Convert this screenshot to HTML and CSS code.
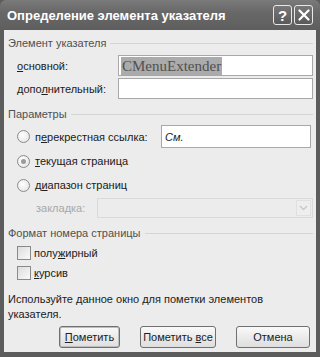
FILE: index.html
```html
<!DOCTYPE html>
<html>
<head>
<meta charset="utf-8">
<link rel="stylesheet" href="styles.css">
</head>
<body>
<div class="window">
  <div class="titlebar">
    <span class="title">Определение элемента указателя</span>
    <div class="tbtns">
      <span class="tbtn">?</span>
      <span class="tbtn"><svg width="12" height="12" viewBox="0 0 12 12"><path d="M1.5 1.5L10.5 10.5M10.5 1.5L1.5 10.5" stroke="#fff" stroke-width="2.2" stroke-linecap="round"/></svg></span>
    </div>
  </div>
  <div class="body">
    <div class="group"><span>Элемент указателя</span><i></i></div>
    <div class="frow r1"><span class="lbl"><u>о</u>сновной:</span><div class="inp"><span class="sel">CMenuExtender</span></div></div>
    <div class="frow r2"><span class="lbl">допо<u>л</u>нительный:</span><div class="inp"></div></div>

    <div class="group g2"><span>Параметры</span><i></i></div>
    <div class="rrow rr1"><span class="radio"></span><span class="rl">п<u>е</u>рекрестная ссылка:</span><div class="inp see">См.</div></div>
    <div class="rrow rr2"><span class="radio on"></span><span class="rl"><u>т</u>екущая страница</span></div>
    <div class="rrow rr3"><span class="radio"></span><span class="rl">д<u>и</u>апазон страниц</span></div>
    <div class="brow"><span class="dis">закладка:</span><div class="combo"><span class="arrow"><svg width="9" height="6" viewBox="0 0 9 6"><path d="M1 1L4.5 4.5L8 1" fill="none" stroke="#c8c8c8" stroke-width="1.4"/></svg></span></div></div>

    <div class="group g3"><span>Формат номера страницы</span><i></i></div>
    <div class="crow c1"><span class="chk"></span><span class="rl">полу<u>ж</u>ирный</span></div>
    <div class="crow c2"><span class="chk"></span><span class="rl"><u>к</u>урсив</span></div>

    <p class="note">Используйте данное окно для пометки элементов указателя.</p>
    <div class="buttons">
      <span class="btn b1"><span><u>П</u>ометить</span></span>
      <span class="btn b2"><span>Пометить <u>в</u>се</span></span>
      <span class="btn b3"><span>Отмена</span></span>
    </div>
  </div>
</div>
</body>
</html>
```
FILE: styles.css
```css
* { box-sizing: border-box; }
html, body { margin: 0; padding: 0; }
body { width: 320px; height: 357px; overflow: hidden; background: #555; }
.window {
  width: 320px; height: 357px;
  display: flex; flex-direction: column;
  background: #5c5c5c;
  padding: 0 4px 5px 4px;
  font-family: "Liberation Sans", Arial, sans-serif;
  font-size: 11px; color: #202020;
}
.titlebar {
  height: 30px; flex: none;
  margin: 0 -4px;
  padding: 0 7px 0 7px;
  display: flex; align-items: center; justify-content: space-between;
  background: linear-gradient(#7a7a7a, #686868 40%, #5e5e5e);
  border-radius: 6px 6px 0 0;
}
.title {
  color: #fff; font-weight: bold; font-size: 13px;
  font-family: "Liberation Sans", Arial, sans-serif;
}
.tbtns { display: flex; gap: 2px; }
.tbtn {
  width: 19px; height: 20px;
  border: 1px solid #e8e8e8; border-radius: 3px;
  background: linear-gradient(#777, #5a5a5a);
  color: #fff; font-weight: bold; font-size: 15px;
  display: flex; align-items: center; justify-content: center;
  line-height: 1;
}
.body {
  flex: 1; background: #ececec;
  padding: 6px 3px 0 4px;
  display: flex; flex-direction: column;
}
.group { display: flex; align-items: center; height: 14px; line-height: 14px; color: #505050; gap: 4px; }
.group i { flex: 1; height: 1px; background: #d4d4d4; }
.g2 { margin-top: 8px; }
.g3 { margin-top: 8px; }
.frow { display: flex; align-items: center; padding-left: 9px; }
.lbl { width: 101px; }
.r1 { margin-top: 5px; height: 21px; }
.r2 { margin-top: 2px; height: 21px; }
.inp {
  flex: 1; height: 100%;
  background: #fff; border: 1px solid #a8a8a8;
  display: flex; align-items: center; padding-left: 2px;
}
.sel {
  font-family: "Liberation Serif", "Times New Roman", serif; font-size: 15px;
  background: #ababab; color: #505050; height: 18px; line-height: 18px; padding: 0 1px;
}
.rrow, .crow { display: flex; align-items: center; padding-left: 9px; }
.rr1 { margin-top: 4px; height: 23px; }
.rr2 { margin-top: 5px; height: 16px; }
.rr3 { margin-top: 8px; height: 16px; }
.radio {
  width: 13px; height: 13px; border-radius: 50%;
  border: 1px solid #8a8a8a;
  background: radial-gradient(circle at 40% 40%, #fff, #e0e0e0);
  margin-right: 5px; flex: none;
  display: flex; align-items: center; justify-content: center;
}
.radio.on::after { content: ""; width: 5px; height: 5px; border-radius: 50%; background: #9a9a9a; }
.rl { white-space: nowrap; }
.see { flex: none; width: 150px; margin-left: 13px; font-style: italic; padding-left: 3px; }
.rr1 .rl { width: 113px; }
.brow { display: flex; align-items: center; margin-top: 5px; height: 20px; padding-left: 28px; }
.dis { color: #a8a8a8; width: 61px; }
.combo {
  flex: 1; height: 100%; border: 1px solid #dadada; background: #ececec;
  display: flex; justify-content: flex-end; padding: 1px;
}
.arrow {
  width: 15px; border: 1px solid #e0e0e0; background: #eeeeee;
  display: flex; align-items: center; justify-content: center;
}
.c1 { margin-top: 5px; height: 16px; }
.c2 { margin-top: 4px; height: 16px; }
.chk {
  width: 14px; height: 14px; border: 1px solid #8a8a8a; background: linear-gradient(135deg, #dcdcdc, #fafafa);
  margin-right: 3px; flex: none;
}
.note { margin: 11px 0 0 0; line-height: 15px; width: 290px; }
.buttons { display: flex; justify-content: flex-end; gap: 20px; margin-top: 4px; padding-right: 3px; }
.btn {
  height: 22px; display: flex; align-items: center; justify-content: center;
  border: 1px solid #707070; border-radius: 3px; white-space: nowrap;
  background: linear-gradient(#fafafa, #ebebeb 50%, #dedede);
}
.b1 { width: 61px; box-shadow: inset 0 0 0 1px #bdbdbd; }
.b2 { width: 76px; }
.b3 { width: 74px; }
```
